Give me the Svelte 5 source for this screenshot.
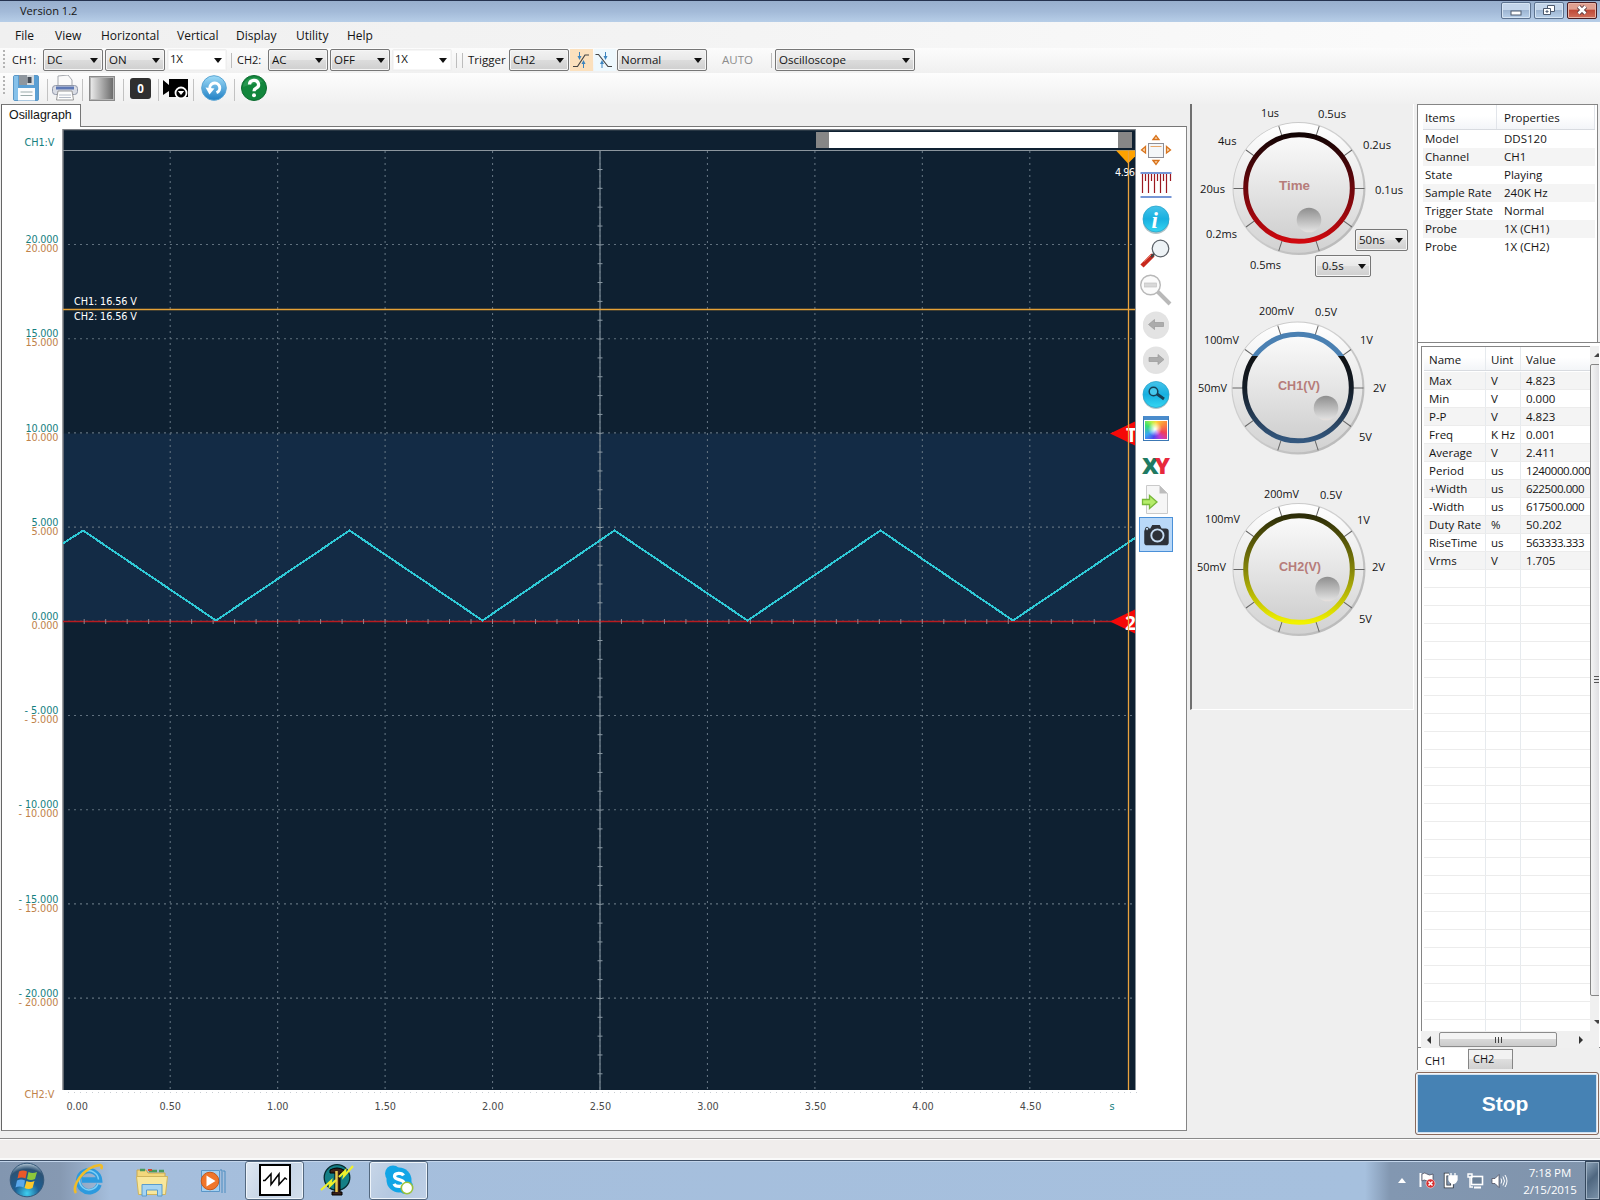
<script>
  const menus = ['File', 'View', 'Horizontal', 'Vertical', 'Display', 'Utility', 'Help'];

  const volts = [20, 15, 10, 5, 0, -5, -10, -15, -20].map((v, i) => ({
    y: 244.5 + i * 94.2,
    text: (v < 0 ? '- ' : '') + Math.abs(v).toFixed(3),
    w: Math.abs(v) >= 10 ? (v < 0 ? 40 : 33) : v < 0 ? 34 : 27
  }));
  const times = Array.from({ length: 9 }, (_, i) => 170.2 + i * 107.45);
  const xLabels = Array.from({ length: 10 }, (_, i) => ({
    x: i === 0 ? 66 : 52 + i * 107.55 - 0.5,
    text: (i * 0.5).toFixed(2)
  }));
  const hTicks = Array.from({ length: 49 }, (_, i) => 84.2 + i * 21.49);
  const vTicks = Array.from({ length: 49 }, (_, i) => 169.5 + i * 18.84);

  const dials = [
    {
      id: 'time', cx: 1299, cy: 188.5, name: 'Time', nx: 1279, ny: 190, nw: 31, kx: 1309, ky: 220,
      labels: [['1us', 1261, 117, 18], ['0.5us', 1318, 118, 28], ['4us', 1218, 145, 18.5], ['0.2us', 1363, 149, 28], ['20us', 1200, 193, 25], ['0.1us', 1375, 194, 28], ['0.2ms', 1206, 238, 31], ['0.5ms', 1250, 269, 31]]
    },
    {
      id: 'ch1', cx: 1298, cy: 388, name: 'CH1(V)', nx: 1278, ny: 390, nw: 42, kx: 1326, ky: 408,
      labels: [['200mV', 1259, 315, 35], ['0.5V', 1315, 316, 22], ['100mV', 1204, 344, 35], ['1V', 1360, 344, 13], ['50mV', 1198, 392, 29], ['2V', 1373, 392, 13], ['5V', 1359, 441, 13]]
    },
    {
      id: 'ch2', cx: 1299, cy: 569.5, name: 'CH2(V)', nx: 1279, ny: 571, nw: 42, kx: 1327.5, ky: 589,
      labels: [['200mV', 1264, 497.5, 35], ['0.5V', 1320, 499, 22], ['100mV', 1205, 523, 35], ['1V', 1357, 524, 13], ['50mV', 1197, 571, 29], ['2V', 1372, 571, 13], ['5V', 1359, 623, 13]]
    }
  ];
  const spokes = Array.from({ length: 10 }, (_, i) => i * 36);

  const props = [
    ['Model', 'DDS120'], ['Channel', 'CH1'], ['State', 'Playing'], ['Sample Rate', '240K Hz'],
    ['Trigger State', 'Normal'], ['Probe', '1X (CH1)'], ['Probe', '1X (CH2)']
  ];
  const measures = [
    ['Max', 'V', '4.823'], ['Min', 'V', '0.000'], ['P-P', 'V', '4.823'], ['Freq', 'K Hz', '0.001'],
    ['Average', 'V', '2.411'], ['Period', 'us', '1240000.000'], ['+Width', 'us', '622500.000'],
    ['-Width', 'us', '617500.000'], ['Duty Rate', '%', '50.202'], ['RiseTime', 'us', '563333.333'],
    ['Vrms', 'V', '1.705'],
    ...Array.from({ length: 26 }, () => ['', '', ''])
  ];
</script>

{#snippet combo(text, cls)}
  <div class="combo {cls}"><span>{text}</span><i></i></div>
{/snippet}

<div class="screen">
  <header class="title">
    <span>Version 1.2</span>
    <div class="winbtns">
      <b class="wb"><svg width="30" height="16"><rect x="10" y="9" width="10" height="4" fill="#fff" stroke="#4d5a6e" /></svg></b>
      <b class="wb"><svg width="30" height="16"><path d="M13.5 3.5h7v6h-7z" fill="#fff" stroke="#4d5a6e" /><path d="M9.500 6.500h7v6h-7z" fill="#fff" stroke="#4d5a6e" /><path d="M12 9h2v1h-2z" fill="#9db5d2" stroke="#4d5a6e" /></svg></b>
      <b class="wb close"><svg width="30" height="16"><path d="M11.500 4.500l7 7M18.500 4.500l-7 7" stroke="#5a3a40" stroke-width="4.500" /><path d="M11.500 4.500l7 7M18.500 4.500l-7 7" stroke="#fff" stroke-width="2.500" /></svg></b>
    </div>
  </header>

  <nav class="menu">
    {#each menus as m, i}<span class="m{i}">{m}</span>{/each}
  </nav>

  <div class="bar one">
    <i class="grip"></i><label class="ch">CH1:</label>
    {@render combo('DC', 'w60')}{@render combo('ON', 'w60')}{@render combo('1X', 'w60 plain')}
    <i class="sep s1"></i><label class="ch c2">CH2:</label>
    {@render combo('AC', 'w60')}{@render combo('OFF', 'w60')}{@render combo('1X', 'w60 plain')}
    <i class="sep s2"></i><i class="sep s3"></i><label class="trig">Trigger</label>
    {@render combo('CH2', 'w60')}
    <svg class="edge on" width="23" height="22" viewBox="0 0 23 22"><path d="M3 17.500h4.500L15 6h4" fill="none" stroke="#444" stroke-width="1.200" /><path d="M9.500 3v5M13.500 19v-5" stroke="#3c84bf" /><path d="M7.500 7h4l-2 4zM11.500 15h4l-2-4z" fill="#3c84bf" /></svg>
    <svg class="edge off" width="22" height="22" viewBox="0 0 22 22"><path d="M1.500 5.500h3L14 17.500h4" fill="none" stroke="#444" stroke-width="1.200" /><path d="M11.500 3v5M8 19v-5" stroke="#3c84bf" /><path d="M9.500 7h4l-2 4zM6 15h4l-2-4z" fill="#3c84bf" /></svg>
    {@render combo('Normal', 'w90')}
    <span class="auto">AUTO</span><i class="sep s4"></i>
    {@render combo('Oscilloscope', 'w140')}
  </div>

  <div class="bar two">
    <i class="grip"></i>
    <svg class="i-save" width="26" height="26" viewBox="0 0 26 26"><rect x=".5" y=".5" width="25" height="25" rx="1.500" fill="#5a9fd4" stroke="#5b97c6" /><path d="M1 1h4v24H1z" fill="#86c1ea" /><rect x="6" y="0" width="15" height="10" fill="#d5dade" /><path d="M6 0h8v10H6z" fill="#8e969e" /><rect x="14.500" y="2" width="4" height="6" fill="#444b55" /><rect x="5" y="13" width="17" height="12.500" fill="#fbfcfd" /><path d="M7.500 17h12M7.500 20.500h12" stroke="#9aa" /></svg>
    <i class="sep t1"></i>
    <svg class="i-print" width="26" height="26" viewBox="0 0 26 26"><path d="M6 1l10-1 4 5v8H6z" fill="#fafafa" stroke="#a5a8ae" /><rect x=".5" y="10.500" width="25" height="9" rx="3" fill="#d9dce4" stroke="#9097a8" /><path d="M4 13h18" stroke="#5e78b5" stroke-width="3" /><path d="M6 16h14l1.500 9H4.500z" fill="#fdfdfd" stroke="#999" /><path d="M7 20h12M7 22.500h12" stroke="#b5bcc8" /></svg>
    <i class="sep t2"></i><i class="shade"></i><i class="sep t3"></i>
    <b class="zero">0</b><i class="sep t4"></i>
    <svg class="i-cam" width="26" height="22" viewBox="0 0 26 22"><path d="M0 2l6 5V1h19v18H6v-6l-6 4z" fill="#000" /><circle cx="18" cy="15" r="5.500" fill="#000" stroke="#fff" stroke-width="1.800" /><path d="M14.800 13h6.400L18 17z" fill="#fff" /></svg>
    <i class="sep t5"></i>
    <svg class="i-undo" width="26" height="26" viewBox="0 0 26 26"><defs><linearGradient id="ug" x2="0" y2="1"><stop stop-color="#9fdcf8" /><stop offset="1" stop-color="#1f7fc4" /></linearGradient></defs><circle cx="13" cy="13" r="12.300" fill="url(#ug)" stroke="#5aa5d3" /><path d="M9 14.500a5 5 0 1 1 6.500 3.200" fill="none" stroke="#fff" stroke-width="3" /><path d="M4.500 12.500l9 1-5 6z" fill="#fff" /></svg>
    <i class="sep t6"></i>
    <svg class="i-help" width="26" height="26" viewBox="0 0 26 26"><circle cx="13" cy="13" r="12.500" fill="#12863c" stroke="#0d6b30" /><path d="M2 12a11 10 0 0 1 20-5q-8 1-20 5z" fill="#35a45c" opacity=".6" /><path d="M8.500 9.500a4.500 4.200 0 1 1 6.500 3.800q-2 1-2 3" fill="none" stroke="#fff" stroke-width="3.300" /><circle cx="13" cy="20.300" r="2" fill="#fff" /></svg>
  </div>

  <main>
    <section class="scope">
      <div class="tab">Osillagraph</div>
      <div class="sheet">
        <svg class="plot" width="1135" height="1001" viewBox="2 129 1135 1001">
          <rect x="63" y="129" width="1072.500" height="961" fill="#0e2031" />
          <rect x="63" y="433.500" width="1072" height="188" fill="#132b45" />
          <path d="M63 1090V129.500H1135" fill="none" stroke="#7c7f84" stroke-width="1.500" />
          <path d="M63 150.500H1135" stroke="#8c969e" />
          <g class="grid">
            {#each volts as v}<path d="M68 {v.y}H1135" />{/each}
            {#each times as t}<path d="M{t} 151V1090" />{/each}
          </g>
          <path d="M600 151V1090" stroke="#647480" stroke-width="1.600" />
          <g stroke="#8a98a3">
            {#each vTicks as y}<path d="M597.500 {y}h5" />{/each}
          </g>
          <path d="M63 621.500H1130" stroke="#b81c20" stroke-width="1.400" />
          <g stroke="#90878f">
            {#each hTicks as x}<path d="M{x} 619v5" />{/each}
          </g>
          <polyline class="wave" points="63,543.500 83,530.500 216,620.500 349.500,530.500 482.500,620.500 614.500,530.500 747.500,620.500 880.500,530.500 1013,620.500 1135,538" />
          <rect x="816" y="132" width="316" height="16" fill="#fff" />
          <rect x="816" y="132" width="13" height="16" fill="#868686" />
          <rect x="1118" y="132" width="14" height="16" fill="#868686" />
          <path d="M63 309.500H1135" stroke="#e5a136" stroke-width="1.300" />
          <g fill="#fff" class="tiny">
            <text x="74" y="304.500" textLength="63">CH1: 16.56 V</text>
            <text x="74" y="319.500" textLength="63">CH2: 16.56 V</text>
            <text x="1115" y="176" textLength="20">4.96</text>
          </g>
          <path d="M1110 433.500l25-12v24zM1110 621.500l25-12v24z" fill="#f50808" />
          <g fill="#fff" class="flag">
            <clipPath id="pc"><rect x="62" y="129" width="1073" height="961" /></clipPath>
            <text x="1126" y="441.500" clip-path="url(#pc)">T</text>
            <text x="1125" y="629.500" clip-path="url(#pc)">2</text>
          </g>
          <path d="M1116 150.500h19v6l-7 7z" fill="#ffa200" />
          <path d="M1128.500 151V1090" stroke="#eaa23e" stroke-width="1.300" />
          <path d="M68 1092.500H1137M1137.500 151V1092" stroke="#c9cdd2" stroke-dasharray="1 5" />
          <g class="tiny teal">
            <text x="24.500" y="146" textLength="30">CH1:V</text>
            {#each volts as v}<text x={58.500 - v.w} y={v.y - 1.400} textLength={v.w}>{v.text}</text>{/each}
            <text x="1109.500" y="1110">s</text>
          </g>
          <g class="tiny amber">
            <text x="24.500" y="1097.500" textLength="30">CH2:V</text>
            {#each volts as v}<text x={58.500 - v.w} y={v.y + 7.700} textLength={v.w}>{v.text}</text>{/each}
          </g>
          <g class="tiny axis">
            {#each xLabels as l}<text x={l.x + 0.4} y="1110" textLength="21.500">{l.text}</text>{/each}
          </g>
        </svg>

        <div class="tools">
          <svg viewBox="0 0 34 35"><rect x="9.500" y="11.500" width="15" height="14" fill="#f4f6f8" stroke="#8e8e96" /><path d="M11.500 14.500h11" stroke="#e8a668" /><path d="M14 7.500l3-4 3 4zM14 28.500l3 4 3-4zM6.500 14.500l-4 3.500 4 3zM27.500 14.500l4 3.500-4 3z" fill="#fbd9b0" stroke="#d8731c" stroke-width="1.300" /></svg>
          <svg viewBox="0 0 34 35"><path d="M1.500 6h31M1.500 30h31" stroke="#4a74c8" stroke-width="1.500" /><path d="M3.500 7v19M9.500 7v19M15.500 7v19M21.500 7v19M27.500 7v19M6.500 7v7M12.500 7v7M18.500 7v7M24.500 7v7M31.500 7v7" stroke="#9c1820" stroke-width="1.200" /></svg>
          <svg viewBox="0 0 34 35"><defs><linearGradient id="ig" x2="0" y2="1"><stop stop-color="#45c3ea" /><stop offset=".5" stop-color="#18b0e0" /><stop offset="1" stop-color="#35d6f2" /></linearGradient></defs><ellipse cx="17" cy="19.500" rx="13" ry="12.500" fill="#8ea8ae" opacity=".7" /><circle cx="17" cy="17" r="13" fill="url(#ig)" stroke="#2aa5cc" stroke-width=".8" /><text x="12.500" y="25.500" class="info">i</text></svg>
          <svg viewBox="0 0 34 35"><path d="M14 18L3 29" stroke="#c8281c" stroke-width="4.500" /><path d="M16 16l-4 4" stroke="#444" stroke-width="2.500" /><path d="M5 24.500l7-6.500" stroke="#f08a78" stroke-width="1" /><circle cx="21.500" cy="11.500" r="8.300" fill="#eef3f6" stroke="#5b6168" stroke-width="1.200" /></svg>
          <svg viewBox="0 0 34 35"><path d="M18 19l13 13" stroke="#b9b9b9" stroke-width="4" /><circle cx="11.500" cy="13" r="9.800" fill="#fbfbfb" stroke="#b8b8b8" stroke-width="1.400" /><rect x="5.500" y="11" width="12" height="4" fill="#d8d8d8" stroke="#c4c4c4" stroke-width=".7" /></svg>
          <svg viewBox="0 0 34 35"><circle cx="17" cy="19" r="13" fill="#cfcfcf" opacity=".6" /><circle cx="17" cy="17.500" r="13" fill="#e3e3e3" /><path d="M9.500 17.500l6-5v3h9v4h-9v3z" fill="#acacac" stroke="#999" stroke-width=".7" /></svg>
          <svg viewBox="0 0 34 35"><circle cx="17" cy="19" r="13" fill="#cfcfcf" opacity=".6" /><circle cx="17" cy="17.500" r="13" fill="#e3e3e3" /><path d="M25 17.500l-6-5v3h-9v4h9v3z" fill="#acacac" stroke="#999" stroke-width=".7" /></svg>
          <svg viewBox="0 0 34 35"><ellipse cx="17" cy="19.500" rx="13" ry="12.500" fill="#8ea8ae" opacity=".7" /><circle cx="17" cy="17.500" r="13" fill="url(#ig)" stroke="#2aa5cc" stroke-width=".8" /><circle cx="14.500" cy="14.500" r="4.300" fill="#46c8ec" stroke="#173f55" stroke-width="1.500" /><path d="M18 17l7 5" stroke="#173f55" stroke-width="2.800" /></svg>
          <div class="spectrum"><i></i></div>
          <div class="xy"><b>X</b><b>Y</b></div>
          <svg viewBox="0 0 34 35"><path d="M7.500 3.500h13l8 8v20h-21z" fill="#f6f6f6" stroke="#cacaca" /><path d="M20.500 3.500v8h8z" fill="#bdbdbd" /><path d="M3.500 17.500h7v-4l7.500 6.500-7.500 6.500v-4h-7z" fill="#b5ec6a" stroke="#78b83a" stroke-width="1.300" /></svg>
          <svg class="shot" viewBox="0 0 34 35"><path d="M7 11h4l2-3.500h8l2 3.500h4.500a3 3 0 0 1 3 3v12a3 3 0 0 1-3 3h-20a3 3 0 0 1-3-3V14a3 3 0 0 1 2.500-3z" fill="#2d3138" /><circle cx="18.500" cy="18.500" r="6.500" fill="#2d3138" stroke="#c6dcf2" stroke-width="2" /><circle cx="7.500" cy="11.500" r="1.700" fill="#c6dcf2" stroke="#2d3138" /></svg>
        </div>
      </div>
    </section>

    <section class="dials">
      <svg width="221" height="605" viewBox="1192 104 221 605">
        <defs>
          <linearGradient id="time" x2="0" y2="1"><stop stop-color="#120404" /><stop offset=".5" stop-color="#6c070c" /><stop offset=".9" stop-color="#b8080e" /><stop offset="1" stop-color="#d0080e" /></linearGradient>
          <linearGradient id="ch1" x2="0" y2="1"><stop offset=".14" stop-color="#4a80b2" /><stop offset=".2" stop-color="#4a80b2" /><stop offset=".2" stop-color="#101214" /><stop offset=".5" stop-color="#141c26" /><stop offset="1" stop-color="#34587f" /></linearGradient>
          <linearGradient id="ch2" x2="0" y2="1"><stop stop-color="#2c2c08" /><stop offset=".5" stop-color="#84840a" /><stop offset="1" stop-color="#f2f200" /></linearGradient>
          <linearGradient id="rim" x2="0" y2="1"><stop stop-color="#fff" /><stop offset="1" stop-color="#d2d2d2" /></linearGradient>
          <linearGradient id="face" x2="0" y2="1"><stop stop-color="#fbfbfb" /><stop offset="1" stop-color="#cfcfcf" /></linearGradient>
          <linearGradient id="knob" x2="0" y2="1"><stop stop-color="#8e8e8e" /><stop offset=".9" stop-color="#dcdcdc" /><stop offset="1" stop-color="#e8e0dc" /></linearGradient>
          <linearGradient id="lip" x2="1" y2="1"><stop stop-color="#c0c0c0" /><stop offset=".4" stop-color="#d0d0d0" /><stop offset="1" stop-color="#b4b4b4" /></linearGradient>
        </defs>
        {#each dials as d}
          <circle cx={d.cx} cy={d.cy} r="66.500" fill="url(#lip)" />
          <circle cx={d.cx - 0.6} cy={d.cy - 0.7} r="64.900" fill="url(#rim)" />
          {#each spokes as a}
            <path d="M{d.cx + 55} {d.cy}h10.500" transform="rotate({a} {d.cx} {d.cy})" stroke="#666" />
          {/each}
          <circle cx={d.cx} cy={d.cy - 0.5} r="53.300" fill="url(#face)" stroke="url(#{d.id})" stroke-width="5" />
          <circle cx={d.kx} cy={d.ky} r="12.300" fill="url(#knob)" />
          <text class="dname" x={d.nx} y={d.ny} textLength={d.nw} lengthAdjust="spacingAndGlyphs">{d.name}</text>
          {#each d.labels as [t, x, y, w]}<text class="dlab" {x} {y} textLength={w} lengthAdjust="spacingAndGlyphs">{t}</text>{/each}
        {/each}
      </svg>
      {@render combo('50ns', 'fast')}
      {@render combo('0.5s', 'slow')}
    </section>

    <aside>
      <div class="info-table">
        <div class="prow head"><span>Items</span><span>Properties</span></div>
        {#each props as p}<div class="prow"><span>{p[0]}</span><span>{p[1]}</span></div>{/each}
      </div>
      <div class="lower">
        <div class="meas">
          <div class="mtable">
            <div class="mrow head"><span>Name</span><span>Uint</span><span>Value</span></div>
            {#each measures as m}<div class="mrow" class:filled={m[0] !== ''} class:long={m[2].length > 6}><span>{m[0]}</span><span>{m[1]}</span><span>{m[2]}</span></div>{/each}
          </div>
          <div class="vscroll"><i class="up"></i><div class="vthumb"><i></i></div><i class="down"></i></div>
        </div>
        <div class="hscroll"><i class="lf"></i><div class="hthumb"><i></i><i></i><i></i></div><i class="rt"></i></div>
      </div>
      <div class="tabs"><span class="t-on">CH1</span><span class="t-off">CH2</span></div>
      <div class="stop"><b>Stop</b></div>
    </aside>
  </main>

  <div class="status"></div>

  <footer>
    <svg class="k0" width="36" height="36" viewBox="0 0 36 36"><defs><radialGradient id="orb" cx=".5" cy=".9" r=".9"><stop stop-color="#3fd0f0" /><stop offset=".4" stop-color="#1d5f94" /><stop offset=".8" stop-color="#2c5274" /><stop offset="1" stop-color="#b8cad8" /></radialGradient></defs><circle cx="18" cy="18" r="16.800" fill="url(#orb)" stroke="#34587a" /><path d="M10 9.500q4-2 8 0l-1.500 7q-4-2-8 0z" fill="#e8582a" /><path d="M19.500 10q4 2 8.500 0l-2 7q-4 2-8 0z" fill="#8cc63c" /><path d="M8 18.500q4-2 8 0l-1.500 7q-4-2-8 0z" fill="#5aa8ec" /><path d="M17.500 19q4 2 8 0l-2 7q-4 2-8 0z" fill="#fbc82c" /></svg>
    <svg class="k1" width="32" height="34" viewBox="0 0 32 34"><path d="M26 21.500A10.500 10.500 0 1 1 26.500 17H9" fill="none" stroke="#2c9ade" stroke-width="5.500" /><path d="M25 20.500A9.500 9.500 0 1 1 25.500 16.500" fill="none" stroke="#7fd0f6" stroke-width="1.500" /><path d="M3 30C-2 24 10 4 27 2q3 .5 1 4" fill="none" stroke="#f0bc28" stroke-width="2.600" /></svg>
    <svg class="k2" width="34" height="32" viewBox="0 0 34 32"><path d="M2 4h9l2 3h17v5H2z" fill="#f2d77c" stroke="#c8a850" /><path d="M5 4h5M14 5h8M24 5h5" stroke="#4a9a5a" stroke-width="2.500" /><path d="M13 4h4" stroke="#d04a30" stroke-width="2" /><path d="M1.500 10.500h31l-2 18h-27z" fill="#f8e79c" stroke="#d0b45c" /><path d="M7 30V18.500h20V30h-4.500v-6h-11v6z" fill="#a5d4f2" stroke="#5a9ccc" /></svg>
    <svg class="k3" width="30" height="28" viewBox="0 0 30 28"><path d="M3.500 3.500h18v21h-18z" fill="#a5d0f0" stroke="#5a96c8" /><path d="M22 3h2v23M25 4h2v22" fill="none" stroke="#4a8cc0" /><circle cx="12" cy="14" r="8.800" fill="#f0762a" stroke="#c8591a" /><path d="M8.500 8.500l9 5.500-9 5.500z" fill="#fff" /></svg>
    <div class="task k4"><svg width="32" height="32" viewBox="0 0 32 32"><rect x="1" y="1" width="30" height="30" fill="#fff" stroke="#000" stroke-width="2" /><path d="M4 16.500h2l6-6.500v10.500l8-10.500v10.500l6-6.500 2 1.500" fill="none" stroke="#000" stroke-width="1.500" /></svg></div>
    <svg class="k5" width="34" height="34" viewBox="0 0 34 34"><circle cx="17" cy="14.500" r="12.800" fill="#147f86" stroke="#062a30" stroke-width="1.300" /><path d="M10 7q7-4 14 0v3h-4v19h2v3H12v-3h3V10h-5z" fill="#3a2018" stroke="#000" /><path d="M16.500 8v21" stroke="#e8c850" stroke-width="2.500" /><path d="M33 3l-9 10 1-5-6 6M1 27l10-9-1 5 6-6" fill="none" stroke="#eef02c" stroke-width="2.200" /></svg>
    <div class="task k6"><svg width="32" height="32" viewBox="0 0 32 32"><circle cx="16" cy="16" r="12.500" fill="#12a5e6" /><circle cx="10" cy="9.500" r="8" fill="#12a5e6" /><circle cx="22.500" cy="22.500" r="7.500" fill="#12a5e6" /><path d="M20.500 11.500c-1.500-3-9-3-9 .8 0 4.500 9.500 2 9.500 7 0 4-8.500 4-10 .5" fill="none" stroke="#fff" stroke-width="3.200" /><circle cx="24" cy="24" r="5.700" fill="#fff" stroke="#9cc23c" stroke-width="1.600" /></svg></div>
    <div class="tray">
      <i class="caret"></i>
      <svg class="y1" width="17" height="17" viewBox="0 0 17 17"><path d="M1.500 1v14" stroke="#fff" stroke-width="2" /><path d="M3 2q3-2 5 0t6 0v7q-3 2-6 0t-5 0z" fill="#fff" stroke="#445" stroke-width=".7" /><circle cx="11.500" cy="11.500" r="4.500" fill="#d83030" stroke="#fff" stroke-width=".5" /><path d="M9.500 9.500l4 4M13.500 9.500l-4 4" stroke="#fff" stroke-width="1.500" /></svg>
      <svg class="y2" width="16" height="17" viewBox="0 0 16 17"><path d="M6 2.500H2.500v12H9V11" fill="none" stroke="#30363f" stroke-width="3.400" /><path d="M6 2.500H2.500v12H9V11" fill="none" stroke="#fff" stroke-width="1.800" /><path d="M6 4h8v4q-1 3-3.500 3.500T6 8zM8 1v3M12 1v3" fill="#fff" stroke="#fff" stroke-width="1.300" /></svg>
      <svg class="y3" width="17" height="17" viewBox="0 0 17 17"><rect x="4.500" y="4.500" width="11" height="8" fill="#6c8198" stroke="#fff" stroke-width="1.600" /><path d="M7 15.500h7" stroke="#fff" stroke-width="2" /><path d="M1 2h4v3H1zM3 5v10h3" fill="none" stroke="#fff" stroke-width="1.400" /></svg>
      <svg class="y4" width="17" height="16" viewBox="0 0 17 16"><path d="M1 5.500h3l4-4v13l-4-4H1z" fill="#fff" stroke="#445" stroke-width=".7" /><path d="M10 5.500q1.500 2.500 0 5M12 3.500q3 4.500 0 9M14 2q4 6 0 12" fill="none" stroke="#fff" /></svg>
      <div class="clock"><span>7:18 PM</span><span>2/15/2015</span></div>
      <i class="desk"></i>
    </div>
  </footer>
</div>

<style>
  :global(body) { margin: 0; overflow: hidden; background: #f0f0f0; }
  .screen {
    width: 1600px; height: 1200px; display: flex; flex-direction: column; overflow: hidden;
    font-family: 'Open Sans', 'Noto Sans', sans-serif; font-size: 11.5px; line-height: 18px; color: #141414; white-space: nowrap;
    background: #efefef;
  }
  .screen * { box-sizing: border-box; }
  svg { flex: none; display: block; }
  i, label { display: block; flex: none; font-style: normal; }

  .title { flex: none; height: 22px; border-top: 1px solid #25324e; background: linear-gradient(#98afcd, #a3bad8 50%, #b7cee8); display: flex; justify-content: space-between; padding: 0 3px 0 20px; line-height: 20px; font-size: 11.1px; }
  .winbtns { display: flex; gap: 3px; padding-top: 1px; }
  .wb { width: 30px; height: 17px; border: 1px solid #5d7390; border-radius: 2px; background: linear-gradient(#c3d5ea 45%, #9db5d2 50%, #b8d0ea); box-shadow: inset 0 0 0 1px #d5e4f3; }
  .wb svg { margin: -1px; }
  .wb.close { border-color: #4a1c20; background: linear-gradient(#e0a090 40%, #c04a38 50%, #d0705c); box-shadow: inset 0 0 0 1px #e8b5a8; }

  .menu { flex: none; height: 26px; background: linear-gradient(90deg, #f0f0f0, #f3f3f3 40%, #fcfcfc); display: flex; padding-left: 15px; line-height: 27px; font-size: 12px; }
  .menu span { width: 60px; flex: none; }
  .menu .m0 { width: 40px; } .menu .m1 { width: 46px; } .menu .m2 { width: 76px; } .menu .m3 { width: 59px; } .menu .m5 { width: 51px; }

  .bar { flex: none; display: flex; }
  .one { height: 25px; align-items: center; gap: 2px; padding: 0 0 1px 3px; background: linear-gradient(#fcfcfc, #f0f0f0); }
  .two { height: 31px; background: linear-gradient(#fdfdfd, #f0f0f0); padding: 2px 0 0 3px; }
  .grip { width: 2px; height: 20px; background: repeating-linear-gradient(#b4b4b4 0 2px, transparent 2px 4px); }
  .two .grip { margin-top: 1px; }
  .ch { width: 29px; margin-left: 5px; font-size: 11px; }
  .c2 { margin-left: 3px; }
  .sep { width: 1px; height: 15px; background: #bdbdbd; }
  .s1 { margin-left: 2px; } .s2 { margin-left: 2px; } .s3 { margin-left: 3px; }
  .trig { width: 39px; margin-left: 3px; }
  .edge.on { background: #fbe0bd; margin-left: -1px; } .edge.off { background: #eef8fd; margin: 0 -1px 0 -1px; }
  .auto { color: #8c8c8c; width: 47px; margin-left: 13px; } .s4 { margin-right: 1px; }

  .combo { flex: none; height: 22px; border: 1px solid #777; border-radius: 2px; background: linear-gradient(#f2f2f2, #e9e9e9 48%, #dcdcdc 52%, #cfcfcf); display: flex; justify-content: space-between; align-items: center; padding: 0 4px 0 3px; box-shadow: inset 0 0 0 1px #f6f6f6; }
  .combo i { border: 4px solid transparent; border-top: 5px solid #111; border-bottom: 0; margin-top: 1px; }
  .w60 { width: 60px; } .w90 { width: 90px; } .w140 { width: 140px; }
  .plain { border-color: #eee; background: #fff; padding-left: 2px; }
  .plain span { padding-bottom: 2px; letter-spacing: -.3px; }

  .two .sep { height: 22px; margin-top: 4px; background: #c2c2c2; }
  .i-save { margin-left: 8px; } .t1 { margin-left: 8px; } .i-print { margin-left: 4px; } .t2 { margin-left: 4px; }
  .shade { width: 26px; height: 25px; margin-left: 6px; margin-top: 1px; border: 1px solid #8a8a8a; background: linear-gradient(90deg, #eee, #666); box-shadow: inset 0 0 0 1px #b5b5b5; }
  .t3 { margin-left: 8px; }
  .zero { width: 21px; height: 21px; margin: 3px 0 0 6px; border-radius: 3px; background: #2f2f2f; color: #fff; text-align: center; line-height: 21px; font-size: 11.5px; flex: none; }
  .t4 { margin-left: 7px; } .i-cam { margin: 3px 0 0 4px; } .t5 { margin-left: 4px; }
  .i-undo { margin-left: 7px; } .t6 { margin-left: 7px; } .i-help { margin-left: 6px; }

  main { flex: none; height: 1035px; display: flex; background: #efefef; border-bottom: 1px solid #8a8a8a; }
  .scope { width: 1186px; margin-left: 1px; display: flex; flex-direction: column; align-items: flex-start; }
  .tab { position: relative; height: 23px; width: 80px; margin-bottom: -1px; background: #fff; border: 1px solid #777; border-left: 1px solid #666; border-bottom: 0; font: 12.4px/21px 'Liberation Sans', sans-serif; padding-left: 7px; }
  .sheet { width: 1186px; height: 1005px; border: 1px solid #858585; border-top-color: #777; border-left: 1px solid #666; background: #fff; display: flex; padding-top: 2px; }
  .grid path { stroke: #60707e; stroke-width: 1.100; stroke-dasharray: 2 4; fill: none; }
  .wave { fill: none; stroke: #2fc9d6; stroke-width: 2; shape-rendering: crispEdges; }
  .tiny { font: 10.8px 'DejaVu Sans Condensed', 'DejaVu Sans', sans-serif; font-stretch: condensed; }
  .teal { fill: #15807f; } .amber { fill: #c0824a; } .axis { fill: #4a4a4a; }
  .flag { font: bold 19px 'Open Sans', sans-serif; }

  .tools { width: 34px; margin: 3px 0 0 2px; display: flex; flex-direction: column; }
  .tools svg { width: 34px; height: 35px; }
  .info { font: italic bold 23px 'Liberation Serif', serif; fill: #fff; }
  .spectrum { width: 26px; height: 25px; margin: 4px 0 6px 4px; border: 1px solid #3c78b4; border-top: 4px solid #4a8ccc; background: #fff; padding: 1px; }
  .spectrum i { width: 22px; height: 18px; background: radial-gradient(circle at 45% 45%, #fff, transparent 45%), conic-gradient(from 0deg at 50% 50%, #fbd83c, #fb8a3c 15%, #f0405a 30%, #c03cd0 42%, #5048f0 55%, #38a8f0 68%, #38e070 82%, #b8f048 92%, #fbd83c); }
  .xy { height: 35px; display: flex; padding-left: 3px; font: bold 23px/36px 'Open Sans', sans-serif; color: #1f7a62; }
  .xy b + b { color: #e8283c; margin-left: -4px; }
  .tools .shot { background: #b9d8f8; border: 1px solid #4a90d8; }

  .dials { position: relative; width: 224px; height: 606px; margin-left: 3px; border-left: 2px solid #707070; border-right: 1px solid #fff; border-bottom: 1px solid #fff; }
  .dlab { font: 11.6px 'Open Sans', sans-serif; fill: #141414; }
  .dname { font: bold 13.500px 'Liberation Sans', sans-serif; fill: #b67c7a; }
  .fast { position: absolute; left: 163px; top: 125px; width: 53px; }
  .slow { position: absolute; left: 123px; top: 151px; width: 56px; padding-left: 6px; }

  aside { width: 183px; margin-left: 3px; display: flex; flex-direction: column; }
  .info-table { height: 239px; margin-right: 2px; border: 1px solid #858585; background: #fff; padding-left: 5px; flex: none; }
  .prow { display: flex; height: 18px; margin-right: 2px; }
  .prow span { width: 79px; padding-left: 2px; }
  .prow:nth-child(odd) { background: #f4f4f4; }
  .prow.head, .mrow.head { background: linear-gradient(#fff 45%, #f3f5f8); border-bottom: 1px solid #d8dbe0; }
  .prow.head { height: 25px; line-height: 26px; }
  .prow.head span { width: 74px; border-right: 1px solid #e2e5ea; }
  .prow.head span + span { padding-left: 7px; width: 98px; }
  .lower { flex: none; height: 706px; border: 1px solid #858585; border-right: 0; background: #fff; padding: 3px 0 0 3px; margin-top: -1px; }
  .meas { display: flex; height: 685px; }
  .mtable { width: 169px; border: 1px solid #858585; border-right: 0; border-bottom: 0; overflow: hidden; padding-left: 2px; }
  .mrow { display: flex; height: 18px; border-bottom: 1px solid #ececec; line-height: 17px; }
  .mrow span { width: 35px; flex: none; padding-left: 5px; border-right: 1px solid #e6eaee; }
  .mrow span:first-child { width: 62px; } .mrow span:last-child { width: 69px; border-right: 0; }
  .mrow.long span:last-child { letter-spacing: -.4px; }
  .mrow.filled:nth-child(even) { background: #f4f4f4; }
  .mrow.head { height: 24px; line-height: 26px; margin-bottom: 1px; }
  .vscroll { width: 9px; background: #f0f0f0; display: flex; flex-direction: column; overflow: hidden; align-items: flex-start; }
  .up { margin: 7px 0 7px 4px; border: 4px solid transparent; border-bottom-color: #444; border-top: 0; }
  .vthumb { width: 16px; height: 632px; border: 1px solid #858585; border-radius: 2px; background: linear-gradient(90deg, #f4f4f4, #cfcfd4); display: flex; align-items: center; flex: none; }
  .vthumb i { width: 8px; height: 8px; margin-left: 3px; background: repeating-linear-gradient(#555 0 1px, transparent 1px 3px); }
  .down { margin: 24px 0 0 4px; border: 4px solid transparent; border-top-color: #444; border-bottom: 0; }
  .hscroll { height: 17px; background: #f0f0f0; display: flex; align-items: center; padding-left: 6px; width: 178px; }
  .lf, .rt { border: 4px solid transparent; border-right-color: #333; border-left: 0; }
  .rt { border: 4px solid transparent; border-left-color: #333; border-right: 0; margin-left: 22px; }
  .hthumb { width: 118px; height: 15px; margin-left: 8px; border: 1px solid #8c8c8c; border-radius: 2px; background: linear-gradient(#f4f4f4 45%, #d8d8d8 50%, #cbcbcb); display: flex; gap: 2px; justify-content: center; align-items: center; flex: none; }
  .hthumb i { width: 1px; height: 6px; background: #444; }
  .tabs { display: flex; height: 24px; font-size: 11px; flex: none; }
  .t-on { width: 51px; height: 22px; background: #fff; border-left: 1px solid #858585; padding-left: 7px; line-height: 25px; }
  .t-off { width: 45px; height: 20px; margin-top: 1px; border: 1px solid #858585; border-bottom: 0; background: linear-gradient(#f2f2f2 45%, #dedede 50%, #d0d0d0); padding-left: 4px; line-height: 18px; }
  .stop { width: 184px; height: 63px; margin: 0 0 0 -2px; border: 1px solid #8a6a5c; border-radius: 3px; background: #4682b4; box-shadow: inset 0 0 0 1px #f4f6f8, inset 0 0 0 2px #cfe0f0; color: #fff; text-align: center; padding-right: 4px; flex: none; }
  .stop b { font: bold 21px/61px 'Liberation Sans', sans-serif; }

  .status { flex: none; height: 21px; background: #f0edec; border-top: 1px solid #fdfdfd; border-bottom: 2px solid #fafafa; }

  footer { flex: none; height: 40px; border-top: 1px solid #3e5068; box-shadow: inset 0 1px #c2d4ea; background: linear-gradient(90deg, #8296b0, #8699b2 60px, #a5bedc 110px, #a6c0de 1365px, #8297b1 1390px, #8094ac); display: flex; align-items: flex-start; }
  .k0 { margin: 1px 0 0 9px; } .k1 { margin: 2px 0 0 28px; } .k2 { margin: 5px 0 0 30px; } .k3 { margin: 6px 0 0 29px; }
  .task { flex: none; width: 59px; height: 39px; border: 1px solid #53687f; border-radius: 3px; background: linear-gradient(120deg, #dfe8f2, #c4d3e5 50%, #d3dfec); box-shadow: inset 0 0 0 1px #eef4fa; padding: 2px 0 0 13px; }
  .k4 { margin-left: 17px; } .k5 { margin: 2px 0 0 16px; } .k6 { margin-left: 15px; background: linear-gradient(120deg, #c8d6e8, #b4c8e0 50%, #bfd0e6); }
  .tray { margin-left: auto; display: flex; height: 39px; align-items: center; color: #fff; }
  .caret { border: 4px solid transparent; border-bottom: 5px solid #fff; border-top: 0; margin-right: 13px; }
  .y2 { margin-left: 7px; } .y3 { margin-left: 8px; } .y4 { margin-left: 7px; }
  .clock { width: 62px; margin: 0 0 0 11px; display: flex; flex-direction: column; text-align: center; font-size: 11.5px; line-height: 17px; flex: none; align-items: center; letter-spacing: -.1px; }
  .desk { width: 15px; height: 39px; margin-left: 4px; border: 1px solid #34475c; background: linear-gradient(135deg, #8fa5ba, #4f6780 45%, #7c93aa); box-shadow: inset 0 0 0 1px #a0b2c4; }
</style>
